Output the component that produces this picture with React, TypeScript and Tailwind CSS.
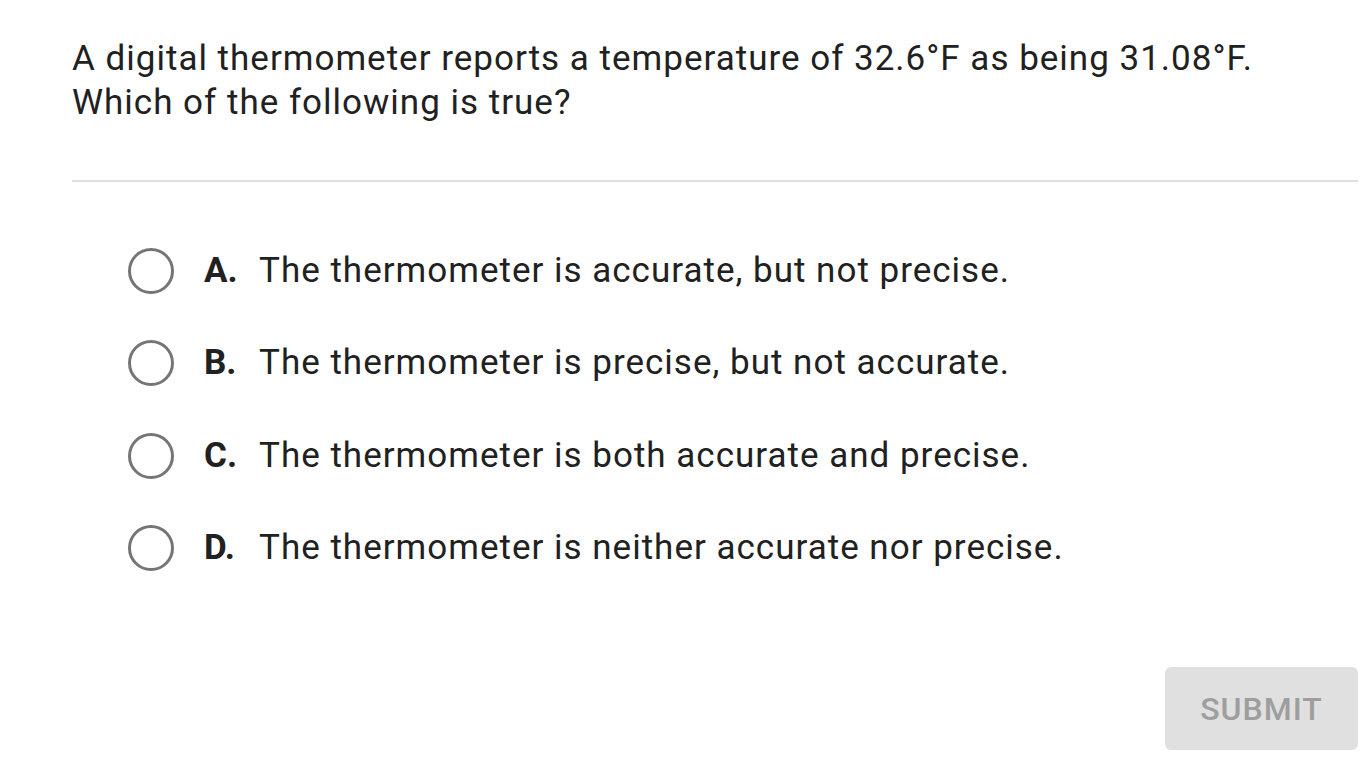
const OPTIONS = [
  { key: "A", text: "The thermometer is accurate, but not precise." },
  { key: "B", text: "The thermometer is precise, but not accurate." },
  { key: "C", text: "The thermometer is both accurate and precise." },
  { key: "D", text: "The thermometer is neither accurate nor precise." },
];

export default function App() {
  return (
    <div className="flex h-[768px] w-[1366px] flex-col bg-white pl-[72px] pr-[8px] font-['Roboto',sans-serif] text-[#212121]">
      <div className="pt-[37px] text-[35px] leading-[44px] tracking-[1px]">
        A digital thermometer reports a temperature of 32.6°F as being 31.08°F.
        <br />
        Which of the following is true?
      </div>

      <div className="mt-[55px] h-[2px] bg-[#e0e0e0]" />

      <div className="mt-[67px] flex flex-col gap-[48.4px] pl-[56px]">
        {OPTIONS.map((o) => (
          <div key={o.key} className="flex h-[44px] items-center">
            <span className="h-[46px] w-[46px] shrink-0 rounded-full border-[3px] border-[#757575]" />
            <span className="ml-[30px] w-[55px] shrink-0 text-[35px] font-bold">{o.key}.</span>
            <span className="text-[35px] tracking-[1px]">{o.text}</span>
          </div>
        ))}
      </div>

      <div className="mt-auto mb-[18px] flex justify-end">
        <button className="flex h-[83px] w-[193px] items-center justify-center rounded-[6px] bg-[#e0e0e0] text-[32px] font-medium tracking-[1px] text-[#9e9e9e]">
          SUBMIT
        </button>
      </div>
    </div>
  );
}
